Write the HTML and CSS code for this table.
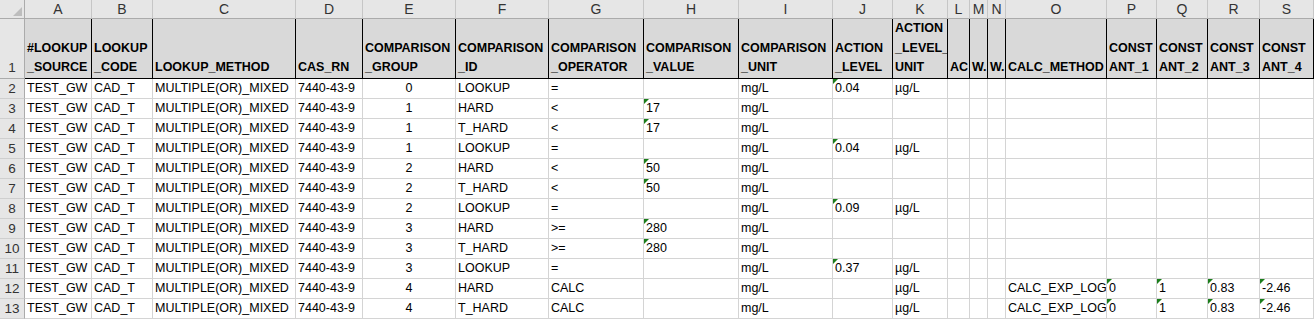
FILE: index.html
```html
<!DOCTYPE html>
<html lang="en">
<head>
    <meta charset="UTF-8">
    <title>lookup_gw.csv</title>
    <link rel="stylesheet" href="styles.css">
</head>
<body>
    <div class="sheet">
        <div class="row letters">
            <div class="corner"></div>
            <div>A</div><div>B</div><div>C</div><div>D</div><div>E</div><div>F</div><div>G</div><div>H</div><div>I</div><div>J</div>
            <div>K</div><div>L</div><div>M</div><div>N</div><div>O</div><div>P</div><div>Q</div><div>R</div><div>S</div>
        </div>

        <div class="row titles">
            <div class="num">1</div>
            <div>#LOOKUP<br>_SOURCE</div>
            <div>LOOKUP<br>_CODE</div>
            <div>LOOKUP_METHOD</div>
            <div>CAS_RN</div>
            <div>COMPARISON<br>_GROUP</div>
            <div>COMPARISON<br>_ID</div>
            <div>COMPARISON<br>_OPERATOR</div>
            <div>COMPARISON<br>_VALUE</div>
            <div>COMPARISON<br>_UNIT</div>
            <div>ACTION<br>_LEVEL</div>
            <div>ACTION<br>_LEVEL_<br>UNIT</div>
            <div>AC</div>
            <div>W.</div>
            <div>W.</div>
            <div>CALC_METHOD</div>
            <div>CONST<br>ANT_1</div>
            <div>CONST<br>ANT_2</div>
            <div>CONST<br>ANT_3</div>
            <div>CONST<br>ANT_4</div>
        </div>

        <div class="row"><div class="num">2</div><div>TEST_GW</div><div>CAD_T</div><div>MULTIPLE(OR)_MIXED</div><div>7440-43-9</div><div class="c">0</div><div>LOOKUP</div><div>=</div><div></div><div>mg/L</div><div class="flag">0.04</div><div>µg/L</div><div></div><div></div><div></div><div></div><div></div><div></div><div></div><div></div></div>
        <div class="row"><div class="num">3</div><div>TEST_GW</div><div>CAD_T</div><div>MULTIPLE(OR)_MIXED</div><div>7440-43-9</div><div class="c">1</div><div>HARD</div><div>&lt;</div><div class="flag">17</div><div>mg/L</div><div></div><div></div><div></div><div></div><div></div><div></div><div></div><div></div><div></div><div></div></div>
        <div class="row"><div class="num">4</div><div>TEST_GW</div><div>CAD_T</div><div>MULTIPLE(OR)_MIXED</div><div>7440-43-9</div><div class="c">1</div><div>T_HARD</div><div>&lt;</div><div class="flag">17</div><div>mg/L</div><div></div><div></div><div></div><div></div><div></div><div></div><div></div><div></div><div></div><div></div></div>
        <div class="row"><div class="num">5</div><div>TEST_GW</div><div>CAD_T</div><div>MULTIPLE(OR)_MIXED</div><div>7440-43-9</div><div class="c">1</div><div>LOOKUP</div><div>=</div><div></div><div>mg/L</div><div class="flag">0.04</div><div>µg/L</div><div></div><div></div><div></div><div></div><div></div><div></div><div></div><div></div></div>
        <div class="row"><div class="num">6</div><div>TEST_GW</div><div>CAD_T</div><div>MULTIPLE(OR)_MIXED</div><div>7440-43-9</div><div class="c">2</div><div>HARD</div><div>&lt;</div><div class="flag">50</div><div>mg/L</div><div></div><div></div><div></div><div></div><div></div><div></div><div></div><div></div><div></div><div></div></div>
        <div class="row"><div class="num">7</div><div>TEST_GW</div><div>CAD_T</div><div>MULTIPLE(OR)_MIXED</div><div>7440-43-9</div><div class="c">2</div><div>T_HARD</div><div>&lt;</div><div class="flag">50</div><div>mg/L</div><div></div><div></div><div></div><div></div><div></div><div></div><div></div><div></div><div></div><div></div></div>
        <div class="row"><div class="num">8</div><div>TEST_GW</div><div>CAD_T</div><div>MULTIPLE(OR)_MIXED</div><div>7440-43-9</div><div class="c">2</div><div>LOOKUP</div><div>=</div><div></div><div>mg/L</div><div class="flag">0.09</div><div>µg/L</div><div></div><div></div><div></div><div></div><div></div><div></div><div></div><div></div></div>
        <div class="row"><div class="num">9</div><div>TEST_GW</div><div>CAD_T</div><div>MULTIPLE(OR)_MIXED</div><div>7440-43-9</div><div class="c">3</div><div>HARD</div><div>&gt;=</div><div class="flag">280</div><div>mg/L</div><div></div><div></div><div></div><div></div><div></div><div></div><div></div><div></div><div></div><div></div></div>
        <div class="row"><div class="num">10</div><div>TEST_GW</div><div>CAD_T</div><div>MULTIPLE(OR)_MIXED</div><div>7440-43-9</div><div class="c">3</div><div>T_HARD</div><div>&gt;=</div><div class="flag">280</div><div>mg/L</div><div></div><div></div><div></div><div></div><div></div><div></div><div></div><div></div><div></div><div></div></div>
        <div class="row"><div class="num">11</div><div>TEST_GW</div><div>CAD_T</div><div>MULTIPLE(OR)_MIXED</div><div>7440-43-9</div><div class="c">3</div><div>LOOKUP</div><div>=</div><div></div><div>mg/L</div><div class="flag">0.37</div><div>µg/L</div><div></div><div></div><div></div><div></div><div></div><div></div><div></div><div></div></div>
        <div class="row"><div class="num">12</div><div>TEST_GW</div><div>CAD_T</div><div>MULTIPLE(OR)_MIXED</div><div>7440-43-9</div><div class="c">4</div><div>HARD</div><div>CALC</div><div></div><div>mg/L</div><div></div><div>µg/L</div><div></div><div></div><div></div><div>CALC_EXP_LOG</div><div class="flag">0</div><div class="flag">1</div><div class="flag">0.83</div><div class="flag">-2.46</div></div>
        <div class="row"><div class="num">13</div><div>TEST_GW</div><div>CAD_T</div><div>MULTIPLE(OR)_MIXED</div><div>7440-43-9</div><div class="c">4</div><div>T_HARD</div><div>CALC</div><div></div><div>mg/L</div><div></div><div>µg/L</div><div></div><div></div><div></div><div>CALC_EXP_LOG</div><div class="flag">0</div><div class="flag">1</div><div class="flag">0.83</div><div class="flag">-2.46</div></div>
    </div>
</body>
</html>
```

FILE: styles.css
```css
body {
    margin: 0;
    background-color: #fff;
    font-family: "Liberation Sans", Arial, sans-serif;
    color: #000;
}
.sheet {
    width: 1314px;
}
.row {
    display: grid;
    grid-template-columns: 25px 67px 61px 143px 67px 93px 93px 95px 95px 94px 60px 55px 22px 18px 18px 101px 50px 51px 52px 54px;
    height: 20px;
}
.row > div {
    position: relative;
    box-sizing: border-box;
    border-right: 1px solid #d4d4d4;
    border-bottom: 1px solid #d4d4d4;
    padding: 0 2px;
    font-size: 12.5px;
    line-height: 19px;
    white-space: nowrap;
    overflow: hidden;
}
.row > .c {
    text-align: center;
}

/* row numbers down the left edge */
.row > .num {
    padding: 0;
    background-color: #e6e6e6;
    border-right-color: #ababab;
    border-bottom-color: #cfcfcf;
    text-align: center;
    font-size: 13.5px;
    color: #333;
}

/* column letters */
.letters {
    height: 19px;
}
.letters > div {
    background-color: #e6e6e6;
    border-right-color: #c6c6c6;
    border-bottom-color: #ababab;
    text-align: center;
    font-size: 14px;
    line-height: 18px;
    color: #333;
}
.letters > .corner {
    display: flex;
    align-items: flex-end;
    justify-content: flex-end;
    padding: 0 2px 2px 0;
    border-right-color: #ababab;
}
.corner::after {
    content: '';
    border-style: solid;
    border-width: 0 0 9px 9px;
    border-color: transparent transparent #bdbdbd transparent;
}

/* header row with the field names */
.titles {
    height: 60px;
}
.titles > div {
    display: flex;
    flex-direction: column;
    justify-content: flex-end;
    background-color: #d9d9d9;
    border-right-color: #000;
    border-bottom-color: #000;
    font-weight: bold;
    line-height: 19.7px;
}
.titles > .num {
    align-items: center;
    background-color: #e6e6e6;
    border-right-color: #ababab;
    border-bottom-color: #ababab;
    font-weight: normal;
}

/* number stored as text marker */
.flag::before {
    content: '';
    position: absolute;
    top: 0;
    left: 0;
    border-style: solid;
    border-width: 5px 5px 0 0;
    border-color: #1b7d1b transparent transparent transparent;
}
```
